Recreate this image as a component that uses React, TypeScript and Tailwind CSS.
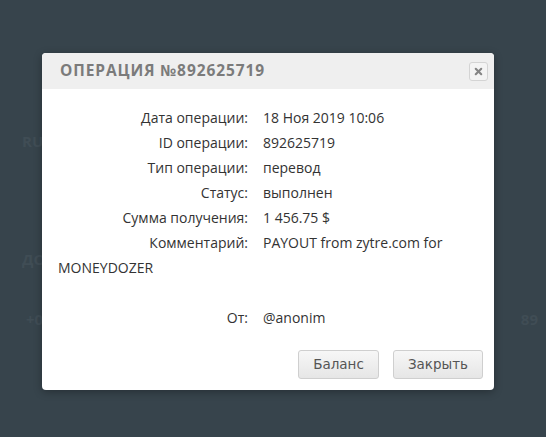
import { X } from "lucide-react";

const rows: [string, string[]][] = [
  ["Дата операции:", ["18 Ноя 2019 10:06"]],
  ["ID операции:", ["892625719"]],
  ["Тип операции:", ["перевод"]],
  ["Статус:", ["выполнен"]],
  ["Сумма получения:", ["1 456.75 $"]],
  ["Комментарий:", ["PAYOUT from zytre.com for", "MONEYDOZER"]],
];

export default function App() {
  return (
    <div className="relative w-[546px] h-[437px] overflow-hidden bg-[#37444c] font-['Open_Sans',sans-serif]">
      {/* page behind the overlay */}
      <div className="flex flex-col px-[22px] pt-[130px] text-[15px] font-bold text-[#404d55]">
        <div className="h-[18px]">RU</div>
        <div className="mt-[100px] h-[18px]">ДО</div>
        <div className="mt-[42px] flex h-[18px] justify-between pl-[4px]">
          <span>+0</span>
          <span className="-mr-[14px]">89</span>
        </div>
      </div>

      {/* modal */}
      <div className="absolute left-[42px] top-[53px] w-[452px] overflow-hidden rounded-[4px] bg-white shadow-[0_2px_8px_rgba(0,0,0,0.3)]">
        <div className="flex h-[36px] items-center justify-between bg-[#efefef] pl-[18px] pr-[6px]">
          <span className="text-[15.5px] font-bold uppercase tracking-[0.9px] text-[#7b7b7b]">
            Операция №892625719
          </span>
          <button className="flex h-[19px] w-[19px] items-center justify-center rounded-[3px] border border-[#d4d4d4] bg-[#f4f4f4]">
            <X size={11} strokeWidth={4.5} className="text-[#858585]" />
          </button>
        </div>

        <div className="px-[16px] pt-[16px] text-[14px] leading-[25px] text-[#333]">
          {rows.map(([label, parts]) => (
            <div key={label}>
              <span className="inline-block w-[190px] text-right">{label}</span>
              <span className="ml-[15px]">{parts[0]}</span>
              {parts[1] && <> <span>{parts[1]}</span></>}
            </div>
          ))}
          <div className="h-[25px]" />
          <div>
            <span className="inline-block w-[190px] text-right">От:</span>
            <span className="ml-[15px]">@anonim</span>
          </div>
        </div>

        <div className="flex justify-end gap-[14px] px-[11px] pb-[11px] pt-[20px] font-['DejaVu_Sans',sans-serif] text-[13.5px] text-[#555]">
          <button className="h-[29px] w-[81px] rounded-[3px] border border-[#cfcfcf] bg-gradient-to-b from-[#f7f7f7] to-[#e6e6e6]">
            Баланс
          </button>
          <button className="h-[29px] w-[90px] rounded-[3px] border border-[#cfcfcf] bg-gradient-to-b from-[#f7f7f7] to-[#e6e6e6]">
            Закрыть
          </button>
        </div>
      </div>
    </div>
  );
}
